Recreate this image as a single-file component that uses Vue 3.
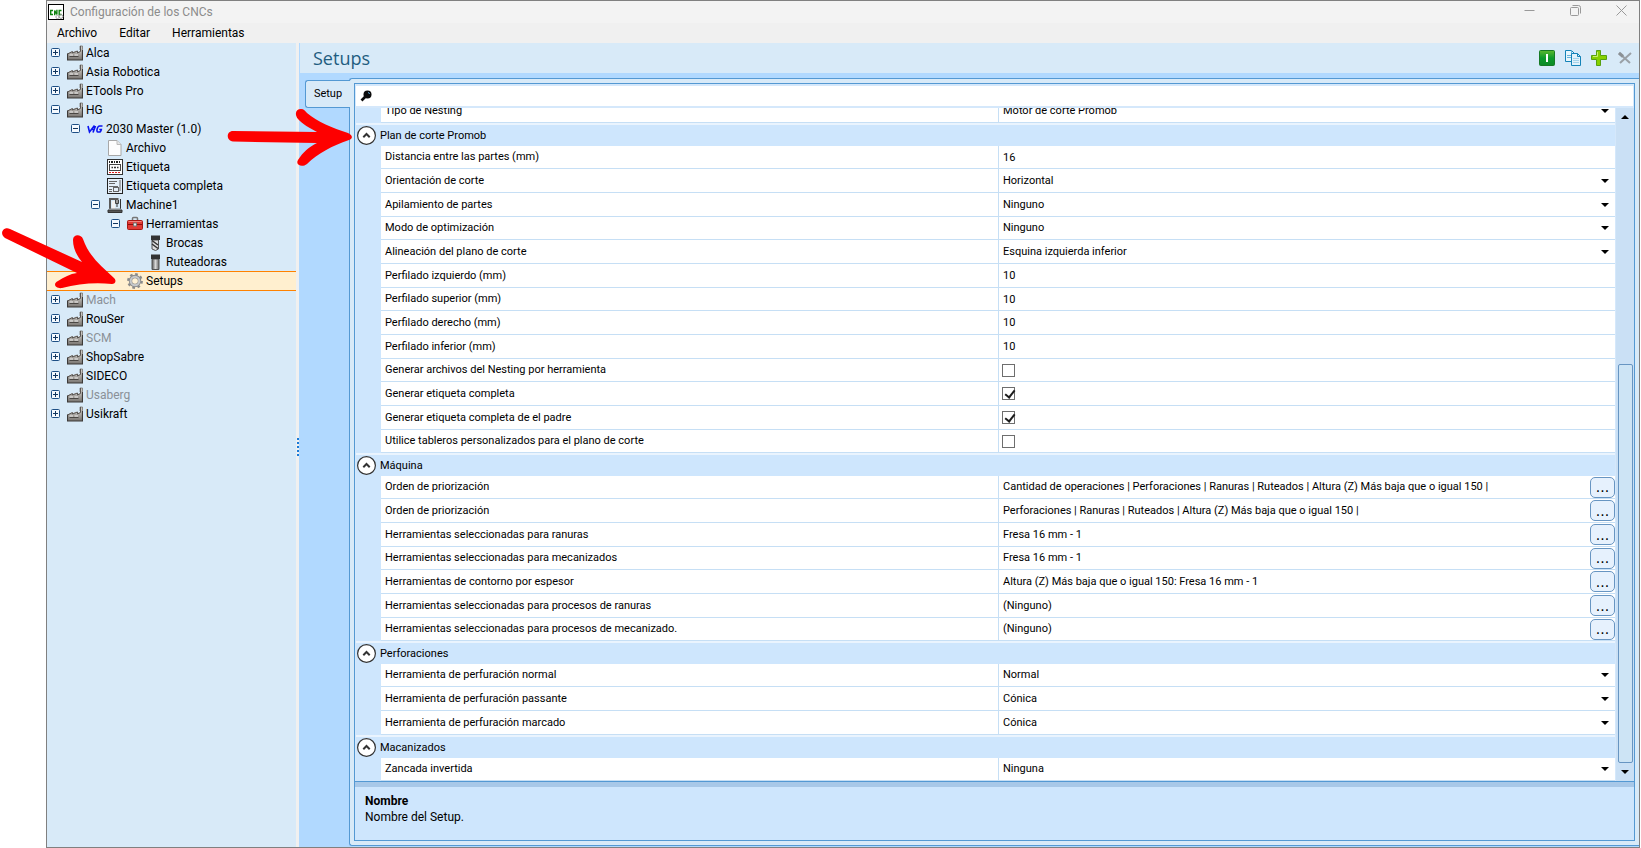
<script setup>
import { ref } from 'vue'

const tree = [
  { name: 'Alca', level: 0, icon: 'factory', box: 'plus' },
  { name: 'Asia Robotica', level: 0, icon: 'factory', box: 'plus' },
  { name: 'ETools Pro', level: 0, icon: 'factory', box: 'plus' },
  { name: 'HG', level: 0, icon: 'factory', box: 'minus' },
  { name: '2030 Master (1.0)', level: 1, icon: 'hg', box: 'minus' },
  { name: 'Archivo', level: 2, icon: 'file' },
  { name: 'Etiqueta', level: 2, icon: 'label' },
  { name: 'Etiqueta completa', level: 2, icon: 'labelFull' },
  { name: 'Machine1', level: 2, icon: 'machine', box: 'minus' },
  { name: 'Herramientas', level: 3, icon: 'toolbox', box: 'minus' },
  { name: 'Brocas', level: 4, icon: 'drill' },
  { name: 'Ruteadoras', level: 4, icon: 'router' },
  { name: 'Setups', level: 3, icon: 'gear', selected: true },
  { name: 'Mach', level: 0, icon: 'factory', box: 'plus', muted: true },
  { name: 'RouSer', level: 0, icon: 'factory', box: 'plus' },
  { name: 'SCM', level: 0, icon: 'factory', box: 'plus', muted: true },
  { name: 'ShopSabre', level: 0, icon: 'factory', box: 'plus' },
  { name: 'SIDECO', level: 0, icon: 'factory', box: 'plus' },
  { name: 'Usaberg', level: 0, icon: 'factory', box: 'plus', muted: true },
  { name: 'Usikraft', level: 0, icon: 'factory', box: 'plus' },
]

const sections = ref([
  {
    title: '',
    rows: [{ label: 'Tipo de Nesting', type: 'select', value: 'Motor de corte Promob' }],
  },
  {
    title: 'Plan de corte Promob',
    rows: [
      { label: 'Distancia entre las partes (mm)', type: 'text', value: '16' },
      { label: 'Orientación de corte', type: 'select', value: 'Horizontal' },
      { label: 'Apilamiento de partes', type: 'select', value: 'Ninguno' },
      { label: 'Modo de optimización', type: 'select', value: 'Ninguno' },
      { label: 'Alineación del plano de corte', type: 'select', value: 'Esquina izquierda inferior' },
      { label: 'Perfilado izquierdo (mm)', type: 'text', value: '10' },
      { label: 'Perfilado superior (mm)', type: 'text', value: '10' },
      { label: 'Perfilado derecho (mm)', type: 'text', value: '10' },
      { label: 'Perfilado inferior (mm)', type: 'text', value: '10' },
      { label: 'Generar archivos del Nesting por herramienta', type: 'check', value: false },
      { label: 'Generar etiqueta completa', type: 'check', value: true },
      { label: 'Generar etiqueta completa de el padre', type: 'check', value: true },
      { label: 'Utilice tableros personalizados para el plano de corte', type: 'check', value: false },
    ],
  },
  {
    title: 'Máquina',
    rows: [
      { label: 'Orden de priorización', type: 'dialog', value: 'Cantidad de operaciones | Perforaciones | Ranuras | Ruteados | Altura (Z) Más baja que o igual 150 |' },
      { label: 'Orden de priorización', type: 'dialog', value: 'Perforaciones | Ranuras | Ruteados | Altura (Z) Más baja que o igual 150 |' },
      { label: 'Herramientas seleccionadas para ranuras', type: 'dialog', value: 'Fresa 16 mm - 1' },
      { label: 'Herramientas seleccionadas para mecanizados', type: 'dialog', value: 'Fresa 16 mm - 1' },
      { label: 'Herramientas de contorno por espesor', type: 'dialog', value: 'Altura (Z) Más baja que o igual 150: Fresa 16 mm - 1' },
      { label: 'Herramientas seleccionadas para procesos de ranuras', type: 'dialog', value: '(Ninguno)' },
      { label: 'Herramientas seleccionadas para procesos de mecanizado.', type: 'dialog', value: '(Ninguno)' },
    ],
  },
  {
    title: 'Perforaciones',
    rows: [
      { label: 'Herramienta de perfuración normal', type: 'select', value: 'Normal' },
      { label: 'Herramienta de perfuración passante', type: 'select', value: 'Cónica' },
      { label: 'Herramienta de perfuración marcado', type: 'select', value: 'Cónica' },
    ],
  },
  {
    title: 'Macanizados',
    rows: [{ label: 'Zancada invertida', type: 'select', value: 'Ninguna' }],
  },
])

const search = ref('')
</script>

<template>
  <div class="desktop">
    <svg class="defs" width="0" height="0" aria-hidden="true">
      <defs>
        <linearGradient id="steel" x1="0" y1="0" x2="0" y2="1">
          <stop offset="0" stop-color="#c9c6c2" />
          <stop offset="1" stop-color="#77736f" />
        </linearGradient>
        <linearGradient id="shank" x1="0" y1="0" x2="1" y2="0">
          <stop offset="0" stop-color="#555" />
          <stop offset="0.5" stop-color="#d8d8d8" />
          <stop offset="1" stop-color="#666" />
        </linearGradient>
        <linearGradient id="green" x1="0" y1="0" x2="0" y2="1">
          <stop offset="0" stop-color="#5cb82e" />
          <stop offset="0.5" stop-color="#0c9a2c" />
          <stop offset="1" stop-color="#0d8a26" />
        </linearGradient>
      </defs>
    </svg>

    <div class="window">
      <header class="titlebar">
        <svg class="app-icon" viewBox="0 0 16 16" aria-hidden="true">
          <rect x="0.5" y="0.5" width="15" height="15" fill="#fff" stroke="#000" />
          <path d="M5 6.500h-2.300v4h2.300M6.700 11.200V6.500l2.200 4V5.800M13.500 6.500h-2.300v4h2.300" fill="none" stroke="#0f840f" stroke-width="1.400" />
          <circle cx="9.500" cy="13" r="1.600" fill="none" stroke="#aaa" />
          <circle cx="13" cy="12.500" r="1.900" fill="none" stroke="#999" />
        </svg>
        <span class="title">Configuración de los CNCs</span>
        <div class="win-controls">
          <button type="button" aria-label="Minimizar">
            <svg viewBox="0 0 11 11"><path d="M0.500 5.500h10" /></svg>
          </button>
          <button type="button" aria-label="Restaurar">
            <svg viewBox="0 0 11 11"><rect x="0.500" y="2.500" width="8" height="8" rx="1" /><path d="M2.500 0.500h6a2 2 0 0 1 2 2v6" /></svg>
          </button>
          <button type="button" aria-label="Cerrar">
            <svg viewBox="0 0 11 11"><path d="M0.500 0.500l10 10M10.500 0.500l-10 10" /></svg>
          </button>
        </div>
      </header>

      <nav class="menubar">
        <button type="button">Archivo</button>
        <button type="button">Editar</button>
        <button type="button">Herramientas</button>
      </nav>

      <div class="body">
        <ul class="tree">
          <li
            v-for="node in tree"
            :key="node.name + node.level"
            :class="['node', 'level-' + node.level, { selected: node.selected, muted: node.muted }]"
          >
            <button v-if="node.box" type="button" class="expander" :aria-label="'Expandir ' + node.name">
              <svg viewBox="0 0 9 9">
                <rect x="0.500" y="0.500" width="8" height="8" rx="1" fill="#f4f9fe" stroke="#1d4f85" />
                <path :d="node.box === 'plus' ? 'M2 4.500h5M4.500 2v5' : 'M2 4.500h5'" stroke="#12365f" />
              </svg>
            </button>
            <span v-else class="expander"></span>
            <svg class="icon" viewBox="0 0 16 16" aria-hidden="true">
              <template v-if="node.icon === 'factory'">
                <path d="M13 1h2.500v4H13z" fill="#c9c6c2" stroke="#77736f" stroke-width="0.800" />
                <path d="M0.500 8.500L5 6v1.500L9.500 5.500v2L13 6V4.500h2.500v10.500H0.500z" fill="url(#steel)" />
                <path d="M0.500 9L5.500 6.500v1.500l5-2v2l3-1.500V1" fill="none" stroke="#5a5653" />
                <path d="M0 15h16M15.500 5v10.500M0.500 8.500v6.500" fill="none" stroke="#3d3a38" stroke-width="1.200" />
                <path d="M2.500 10h3.500M7.500 10h3.500" stroke="#f2f2f2" />
                <path d="M2.500 11.500h9" stroke="#4a4744" />
              </template>
              <template v-else-if="node.icon === 'hg'">
                <path d="M1 5l1.500 6L7.500 4.500M8.500 5L6 11.500M4.500 8.500h3" fill="none" stroke="#0a14f0" stroke-width="1.600" />
                <path d="M15.500 5h-3c-2 0-3.800 6-1.500 6h1.500c1 0 1.500-1 1.800-2.500h-2" fill="none" stroke="#0a14f0" stroke-width="1.600" />
              </template>
              <template v-else-if="node.icon === 'file'">
                <path d="M1.500 0.500h8.500l4 4v11H1.500z" fill="#fdfdfd" stroke="#a8a8a8" />
                <path d="M10 0.500v4h4" fill="#e6e6e6" stroke="#bbb" />
              </template>
              <template v-else-if="node.icon === 'label'">
                <rect x="0.500" y="0.500" width="15" height="15" fill="#fff" stroke="#333" />
                <path d="M2 3h12" stroke="#222" stroke-width="2" stroke-dasharray="1 1 2 1" />
                <rect x="2.500" y="5.500" width="11" height="6" fill="none" stroke="#444" />
                <path d="M4.500 8.500h1.500M7 8.500h2M10 8.500h1.500" stroke="#333" stroke-width="1.500" />
                <path d="M2 13.500h12" stroke="#e02020" stroke-dasharray="2 1" />
              </template>
              <template v-else-if="node.icon === 'labelFull'">
                <rect x="0.500" y="0.500" width="15" height="15" fill="#e4eff9" stroke="#222" />
                <path d="M2 3.500h8M2 5.500h6M2 8.500h9M13 2v11M2 11.500h3M2 13.500h3" stroke="#666" />
                <rect x="6.500" y="9.500" width="5" height="4" fill="none" stroke="#666" />
              </template>
              <template v-else-if="node.icon === 'machine'">
                <path d="M1 13h14v2.500H1z" fill="#555" stroke="#333" />
                <path d="M3 12V2h8.500" fill="none" stroke="#5a5a5a" stroke-width="2" />
                <path d="M5 4h3v8h-3z" fill="#f2f2f2" />
                <path d="M8.500 3v3.500h3V3" fill="#999" stroke="#444" />
                <path d="M10 6v4M13.500 2v10" stroke="#333" />
                <path d="M2 12h12" stroke="#888" />
              </template>
              <template v-else-if="node.icon === 'toolbox'">
                <path d="M5.500 4V2.500q0-1 1-1h3q1 0 1 1V4" fill="none" stroke="#777" stroke-width="1.500" />
                <rect x="0.500" y="4.500" width="15" height="9" rx="1" fill="#e23a35" stroke="#a81815" />
                <path d="M1 8.500h14" stroke="#8e0f0c" />
                <path d="M1.500 5.500h13" stroke="#f3817c" />
                <rect x="6.500" y="7" width="3" height="3" fill="#ececec" stroke="#777" />
              </template>
              <template v-else-if="node.icon === 'drill'">
                <path d="M5 5h6.500v9l-3 1.500-3.500-1.500z" fill="#ddd" stroke="#555" />
                <path d="M5 5.500l6 4.500M5 9l6 4.500" stroke="#333" stroke-width="1.500" />
                <path d="M4 0.500h9V5H4z" fill="#333" />
              </template>
              <template v-else-if="node.icon === 'router'">
                <path d="M5 5h7v10.500H5z" fill="url(#shank)" stroke="#555" />
                <path d="M4 0.500h9V5H4z" fill="#333" />
              </template>
              <template v-else>
                <circle cx="8" cy="8" r="6.700" fill="none" stroke="#8a8a8a" stroke-width="2.400" stroke-dasharray="2.600 2.660" />
                <circle cx="8" cy="8" r="4.500" fill="none" stroke="#8a8a8a" stroke-width="3.400" />
                <circle cx="8" cy="8" r="4.300" fill="none" stroke="#c6c9cc" stroke-width="2" />
                <circle cx="8" cy="8" r="2.300" fill="#fff3d6" />
              </template>
            </svg>
            <span>{{ node.name }}</span>
          </li>
        </ul>

        <div class="splitter"></div>

        <main class="pane">
          <div class="grip"></div>
          <div class="pane-head">
            <h1>Setups</h1>
            <div class="tools">
              <button type="button" aria-label="Activar">
                <svg viewBox="0 0 16 16"><rect x="0.500" y="0.500" width="15" height="15" rx="1" fill="url(#green)" stroke="#177a25" /><path d="M8 4v8" stroke="#fff" stroke-width="2" /></svg>
              </button>
              <button type="button" aria-label="Copiar">
                <svg viewBox="0 0 16 16">
                  <path d="M0.500 0.500h6l3 3v8h-9z" fill="#e8f6fd" stroke="#1583b8" />
                  <path d="M6.500 0.500v3h3M2 5.500h4M2 7.500h4" fill="none" stroke="#69b4da" />
                  <path d="M6.500 3.500h6l3 3v9h-9z" fill="#e2f2fb" stroke="#1583b8" />
                  <path d="M12.500 3.500v3h3" fill="none" stroke="#1583b8" />
                  <path d="M8 8.500h6M8 10.500h6M8 12.500h6" stroke="#a5d3ea" />
                </svg>
              </button>
              <button type="button" aria-label="Agregar">
                <svg viewBox="0 0 16 16"><path d="M5.500 0.500h4v5h6v4h-6v6h-4v-6h-5v-4h5z" fill="#86d000" stroke="#56a010" /><path d="M6.500 2v4.500H2" fill="none" stroke="#c8f070" /></svg>
              </button>
              <button type="button" aria-label="Eliminar">
                <svg viewBox="0 0 16 16"><path d="M2 3l11 10M14 3L3 13" stroke="#9aa0a6" stroke-width="2" fill="none" /><path d="M2 3l4 3.500" stroke="#8b9095" stroke-width="3" /></svg>
              </button>
            </div>
          </div>

          <div class="tabs">
            <button type="button" class="tab">Setup</button>
            <section class="panel">
              <div class="inner">
                <label class="search">
                  <svg viewBox="0 0 12 12" aria-label="Buscar"><circle cx="7.500" cy="4.500" r="4" fill="#0a0a0a" /><path d="M5 7L1.500 10.500" stroke="#0a0a0a" stroke-width="2.600" /><path d="M8 2.500q1.500 0 1.500 1.500" fill="none" stroke="#5aa0d0" /></svg>
                  <input v-model="search" type="text" />
                </label>

                <div class="grid-area">
                  <div class="viewport">
                    <table>
                      <colgroup>
                        <col class="c-gutter" />
                        <col />
                        <col />
                      </colgroup>
                      <tbody v-for="(section, s) in sections" :key="s">
                        <tr v-if="section.title" class="section">
                          <th colspan="3" scope="rowgroup">
                            <div class="section-head">
                              <button type="button" class="collapse" :aria-label="'Contraer ' + section.title">
                                <svg viewBox="0 0 19 19"><circle cx="9.500" cy="9.500" r="8.900" fill="#fff" stroke="#333" stroke-width="1.200" /><path d="M6.300 11.200l3.200-3.200 3.200 3.200" fill="none" stroke="#333" stroke-width="2" /></svg>
                              </button>
                              <span>{{ section.title }}</span>
                            </div>
                          </th>
                        </tr>
                        <tr v-for="(row, r) in section.rows" :key="r" class="prop">
                          <td class="gutter"></td>
                          <td class="name"><label :for="'f-' + s + '-' + r">{{ row.label }}</label></td>
                          <td class="value">
                            <div class="field">
                              <template v-if="row.type === 'select'">
                                <select :id="'f-' + s + '-' + r" v-model="row.value"><option>{{ row.value }}</option></select>
                                <svg class="caret" viewBox="0 0 8 4"><path d="M0 0h8L4 4z" /></svg>
                              </template>
                              <input v-else-if="row.type === 'text'" :id="'f-' + s + '-' + r" v-model="row.value" type="text" />
                              <input v-else-if="row.type === 'check'" :id="'f-' + s + '-' + r" v-model="row.value" type="checkbox" />
                              <template v-else>
                                <span>{{ row.value }}</span>
                                <button :id="'f-' + s + '-' + r" type="button" class="more">...</button>
                              </template>
                            </div>
                          </td>
                        </tr>
                      </tbody>
                    </table>
                  </div>
                  <div class="scrollbar">
                    <button type="button" aria-label="Subir"><svg viewBox="0 0 8 4"><path d="M0 4h8L4 0z" /></svg></button>
                    <div class="track">
                      <div class="before"></div>
                      <div class="thumb"></div>
                    </div>
                    <button type="button" aria-label="Bajar"><svg viewBox="0 0 8 4"><path d="M0 0h8L4 4z" /></svg></button>
                  </div>
                </div>

                <div class="help">
                  <strong>Nombre</strong>
                  <span>Nombre del Setup.</span>
                </div>
              </div>
            </section>
          </div>
        </main>
      </div>
    </div>

    <svg class="pointer to-section" viewBox="0 0 140 76" aria-hidden="true">
      <path d="M13 31L97 32C90 28 82 24 78 19C74 14 76 9 81 9C84 9 85 11 87 13C98 22 112 28 128 33C133 35 133 39 129 40C112 46 98 53 87 64C82 68 75 65 78 60C83 52 89 47 97 43L13 41.500C6 41 6 31 13 31Z" />
    </svg>
    <svg class="pointer to-setups" viewBox="0 0 140 76" aria-hidden="true">
      <path d="M10 9L82 42C76 35 73 27 73 20C73 14 81 14 83 19C89 36 100 45 114 58C117 61 115 64 112 64C94 62 78 64 62 68C56 69 52 64 58 61C64 57 70 54 77 53L5 18C-1 14 3 6 10 9Z" />
    </svg>
  </div>
</template>

<style>
body {
  background: #fff;
}
</style>

<style scoped>
.desktop {
  position: relative;
  height: 100vh;
  box-sizing: border-box;
  padding: 0 1px 0 46px;
  font-family: Roboto, "Open Sans", sans-serif;
  font-size: 12px;
  line-height: 16px;
  color: #000;
  overflow: hidden;
}
.desktop * {
  box-sizing: border-box;
}
.defs {
  position: absolute;
}
button {
  padding: 0;
  border: 0;
  background: none;
  font: inherit;
  color: inherit;
}
svg {
  display: block;
}
.window {
  height: 100%;
  display: flex;
  flex-direction: column;
  border: 1px solid #808080;
  background: #f0f0f0;
}
.titlebar {
  display: flex;
  align-items: center;
  height: 22px;
  flex: none;
  padding-left: 1px;
  background: #f3f3f3;
  color: #8c8c8c;
}
.app-icon {
  width: 16px;
  height: 16px;
  margin-right: 6px;
}
.win-controls {
  margin-left: auto;
  display: flex;
  gap: 35px;
  padding: 0 12px 3px 0;
}
.win-controls svg {
  width: 11px;
  height: 11px;
  fill: none;
  stroke: #999;
}
.menubar {
  display: flex;
  align-items: center;
  gap: 22px;
  height: 20px;
  flex: none;
  padding-left: 10px;
}
.body {
  flex: 1;
  min-height: 0;
  display: flex;
}
.tree {
  width: 249px;
  flex: none;
  margin: 0;
  padding: 0;
  list-style: none;
  background: #d8eaf8;
}
.node {
  display: flex;
  align-items: center;
  height: 19px;
  padding-left: 4px;
}
.level-1 {
  padding-left: 24px;
}
.level-2 {
  padding-left: 44px;
}
.level-3 {
  padding-left: 64px;
}
.level-4 {
  padding-left: 84px;
}
.node.selected {
  background: #ffefcf;
  box-shadow: inset 0 1px #ff8200, 0 1px #ff8200;
}
.muted {
  color: #8a9097;
}
.expander {
  width: 9px;
  height: 9px;
  margin-right: 7px;
}
.icon {
  width: 16px;
  height: 16px;
  margin-right: 3px;
}
.splitter {
  width: 3px;
  flex: none;
  background: #f0f0f0;
}
.pane {
  position: relative;
  flex: 1;
  min-width: 0;
  display: flex;
  flex-direction: column;
  background: #b1d9ff;
}
.grip {
  position: absolute;
  left: -2px;
  top: 395px;
  width: 2px;
  height: 18px;
  background: repeating-linear-gradient(#1b7ad6 0 2px, transparent 2px 4px);
}
.pane-head {
  display: flex;
  align-items: center;
  justify-content: space-between;
  height: 30px;
  flex: none;
  margin-left: 1px;
  padding: 0 6px 0 13px;
  background: #d8eaf8;
}
h1 {
  margin: 0;
  font-family: "Open Sans", "Noto Sans", sans-serif;
  font-size: 18px;
  line-height: 24px;
  font-weight: 400;
  color: #1f5d80;
}
.tools {
  display: flex;
  gap: 10px;
}
.tools svg {
  width: 16px;
  height: 16px;
}
.tabs {
  flex: 1;
  min-height: 0;
  display: flex;
  align-items: flex-start;
  padding: 5px 0 1px 6px;
}
.tab {
  position: relative;
  z-index: 1;
  width: 45px;
  height: 28px;
  margin: 2px -1px 0 0;
  flex: none;
  border: 1px solid #5499d3;
  border-right: 0;
  border-radius: 3px 0 0 3px;
  background: #d8eaf8;
  font-size: 11px;
}
.panel {
  align-self: stretch;
  flex: 1;
  min-width: 0;
  display: flex;
  padding: 4px;
  border: 1px solid #5499d3;
  border-right: 0;
  border-radius: 3px 0 0 3px;
  background: #d8eaf8;
}
.inner {
  flex: 1;
  min-width: 0;
  display: flex;
  flex-direction: column;
  border: 1px solid #5499d3;
  background: #d5e8fb;
  font-size: 11px;
}
.search {
  display: flex;
  align-items: center;
  gap: 4px;
  height: 20px;
  flex: none;
  margin: 2px 1px;
  padding-left: 4px;
  background: #fff;
}
.search svg {
  width: 12px;
  height: 12px;
}
.search input {
  flex: 1;
  min-width: 0;
}
input[type="text"],
select {
  height: 18px;
  padding: 0;
  border: 0;
  outline: 0;
  background: transparent;
  font: inherit;
  color: inherit;
  appearance: none;
}
.grid-area {
  flex: 1;
  min-height: 0;
  display: flex;
}
.viewport {
  flex: 1;
  min-width: 0;
  display: flex;
  flex-direction: column;
  justify-content: flex-end;
  overflow: hidden;
  padding: 0 1px;
}
table {
  width: 100%;
  flex: none;
  table-layout: fixed;
  border-collapse: separate;
  border-spacing: 0;
}
.c-gutter {
  width: 25px;
}
th,
td {
  padding: 0;
  text-align: left;
  font-weight: 400;
}
.section th {
  height: 23px;
  border-top: 2px solid #eaf4fe;
  background: #cee6fd;
}
.section-head {
  display: flex;
  align-items: center;
  gap: 4px;
  height: 21px;
  padding-left: 1px;
}
.collapse svg {
  width: 19px;
  height: 19px;
}
.prop td {
  height: 24px;
  background: #fff;
  border-bottom: 1px solid #c6dff5;
}
.prop:nth-child(3n + 2) td {
  height: 23px;
}
.prop td.gutter {
  background: #cee6fd;
  border-bottom-color: #cee6fd;
}
.name {
  padding-left: 4px;
}
.name label {
  display: block;
}
.prop .value {
  border-left: 1px solid #c6dff5;
}
.field {
  display: flex;
  align-items: center;
  justify-content: space-between;
  height: 22px;
  padding-left: 4px;
}
.field input[type="text"],
.field select {
  flex: 1;
  min-width: 0;
}
.caret {
  width: 8px;
  height: 4px;
  margin-right: 6px;
  pointer-events: none;
}
input[type="checkbox"] {
  position: relative;
  width: 13px;
  height: 13px;
  margin: 0 0 0 -1px;
  appearance: none;
  border: 1px solid #6e6e6e;
  background: #fff;
}
input[type="checkbox"]:checked::after {
  content: "";
  position: absolute;
  left: 4px;
  top: 0;
  width: 4px;
  height: 8px;
  border: solid #1c1c1c;
  border-width: 0 2px 2px 0;
  transform: rotate(38deg);
}
.more {
  width: 25px;
  height: 21px;
  border: 1px solid #6795c2;
  border-radius: 5px;
  background: #e6f1fd;
  font-family: "DejaVu Sans", sans-serif;
  font-size: 14px;
  line-height: 18px;
}
.scrollbar {
  width: 18px;
  flex: none;
  display: flex;
  flex-direction: column;
  background: #cae0f5;
}
.scrollbar button {
  height: 18px;
  display: flex;
  align-items: center;
  justify-content: center;
}
.scrollbar button svg {
  width: 8px;
  height: 4px;
}
.track {
  flex: 1;
  display: flex;
  flex-direction: column;
}
.before {
  flex: 3;
}
.thumb {
  flex: 5;
  margin: 0 1px 0 2px;
  border: 1px solid #6795c2;
  border-radius: 2px;
  background: #cde4f5;
}
.help {
  display: flex;
  flex-direction: column;
  height: 59px;
  flex: none;
  padding: 11px 10px 6px;
  border-top: 1px solid #5499d3;
  background: linear-gradient(#a8c8e8 0 5px, #cee6fd 5px);
  font-size: 12px;
}
.pointer {
  position: absolute;
  width: 140px;
  height: 76px;
  fill: #fe0000;
}
.to-section {
  left: 220px;
  top: 100px;
}
.to-setups {
  left: 0;
  top: 220px;
}
</style>
